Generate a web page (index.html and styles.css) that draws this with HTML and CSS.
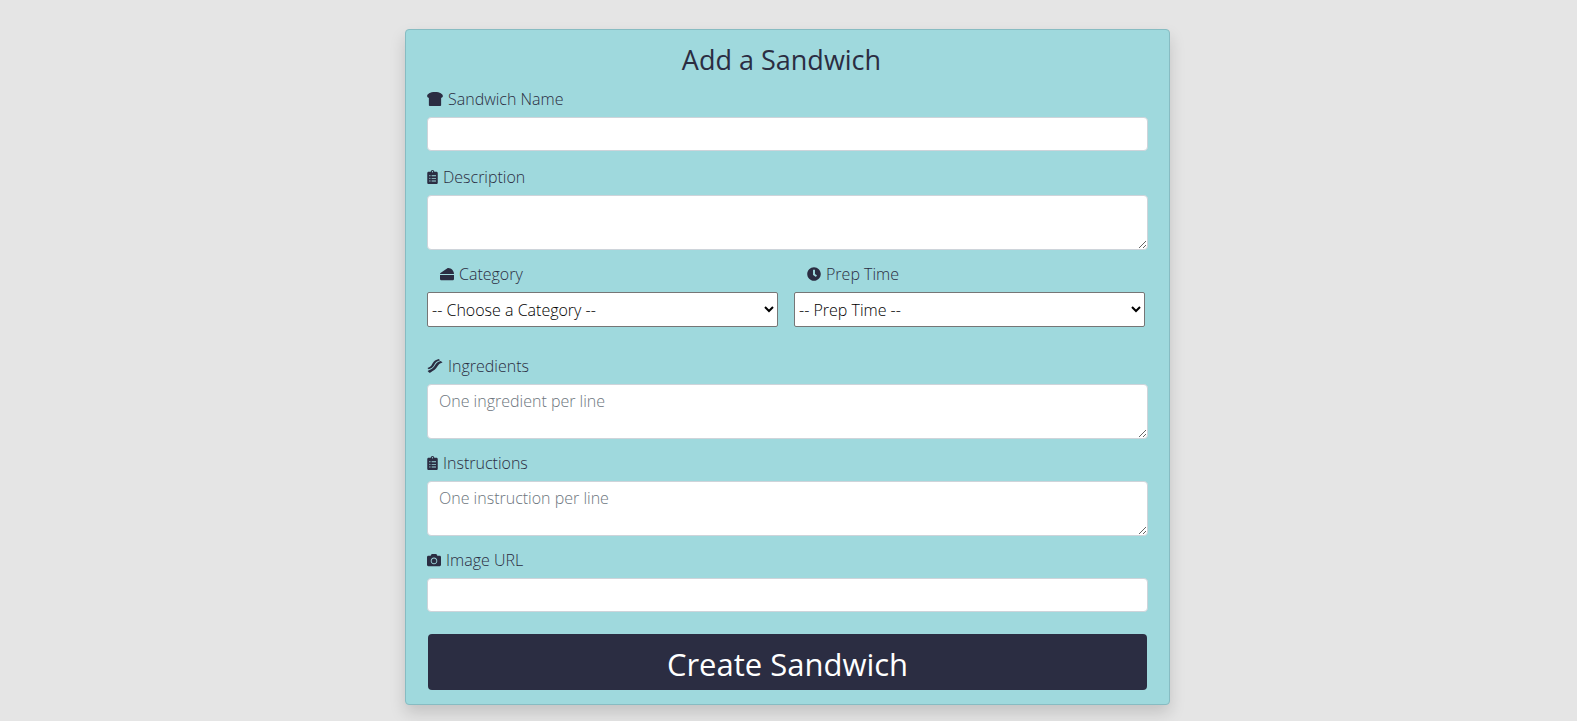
FILE: index.html
```html
<!DOCTYPE html>
<html lang="en">
<head>
<meta charset="utf-8">
<title>Add a Sandwich</title>
<link rel="stylesheet" href="styles.css">
</head>
<body>
<main class="card">
  <h1 class="title">Add a Sandwich</h1>
  <form class="form">
    <div class="field field-name">
      <label class="label" for="name">
        <svg class="icon icon-wide" viewBox="0 0 576 512" aria-hidden="true"><path d="M288 0C108 0 0 80 0 144c0 44 32 64 64 64v272c0 18 14 32 32 32h384c18 0 32-14 32-32V208c32 0 64-20 64-64C576 80 468 0 288 0z"/></svg>
        <span>Sandwich Name</span>
      </label>
      <input class="control" id="name" type="text">
    </div>
    <div class="field">
      <label class="label" for="description">
        <svg class="icon icon-narrow" viewBox="0 0 384 512" aria-hidden="true"><path d="M336 64h-80c0-35.300-28.700-64-64-64s-64 28.700-64 64H48C21.500 64 0 85.500 0 112v352c0 26.500 21.500 48 48 48h288c26.500 0 48-21.500 48-48V112c0-26.500-21.500-48-48-48zM96 424c-13.300 0-24-10.700-24-24s10.700-24 24-24 24 10.700 24 24-10.700 24-24 24zm0-96c-13.300 0-24-10.700-24-24s10.700-24 24-24 24 10.700 24 24-10.700 24-24 24zm0-96c-13.300 0-24-10.700-24-24s10.700-24 24-24 24 10.700 24 24-10.700 24-24 24zm96-192c13.300 0 24 10.700 24 24s-10.700 24-24 24-24-10.700-24-24 10.700-24 24-24zm128 368c0 4.400-3.600 8-8 8H168c-4.400 0-8-3.600-8-8v-16c0-4.400 3.600-8 8-8h144c4.400 0 8 3.600 8 8v16zm0-96c0 4.400-3.600 8-8 8H168c-4.400 0-8-3.600-8-8v-16c0-4.400 3.600-8 8-8h144c4.400 0 8 3.600 8 8v16zm0-96c0 4.400-3.600 8-8 8H168c-4.400 0-8-3.600-8-8v-16c0-4.400 3.600-8 8-8h144c4.400 0 8 3.600 8 8v16z"/></svg>
        <span>Description</span>
      </label>
      <textarea class="control area" id="description"></textarea>
    </div>
    <div class="pair">
      <div class="field">
        <label class="label label-indent" for="category">
          <svg class="icon" viewBox="0 0 512 512" aria-hidden="true"><path d="M0 256c0-22 12-38 30-50L270 46c10-6 22-8 32-7 112 7 210 96 210 217zM0 288h512v160c0 18-14 32-32 32H32c-18 0-32-14-32-32z"/></svg>
          <span>Category</span>
        </label>
        <select class="select" id="category"><option>-- Choose a Category --</option></select>
      </div>
      <div class="field">
        <label class="label label-indent" for="prep">
          <svg class="icon" viewBox="0 0 512 512" aria-hidden="true"><path d="M256 8C119 8 8 119 8 256s111 248 248 248 248-111 248-248S393 8 256 8zm57.100 350.100L224.900 294c-3.100-2.300-4.900-5.900-4.900-9.700V116c0-6.600 5.400-12 12-12h48c6.600 0 12 5.400 12 12v137.700l63.500 46.200c5.400 3.900 6.500 11.400 2.600 16.800l-28.200 38.800c-3.900 5.300-11.400 6.500-16.800 2.600z"/></svg>
          <span>Prep Time</span>
        </label>
        <select class="select" id="prep"><option>-- Prep Time --</option></select>
      </div>
    </div>
    <div class="field">
      <label class="label" for="ingredients">
        <svg class="icon icon-wide" viewBox="0 0 576 512" aria-hidden="true"><path d="M12 326C150 286 151 235 202 155 247 80 319 25 424 2l52 44C325 91 301 148 260 221 216 299 154 350 55 374zM82 399C177 370 234 318 285 238 332 158 367 107 500 70l64 54C451 149 421 200 373 278 318 369 253 420 109 500 96 508 81 508 70 497L17 439z"/></svg>
        <span>Ingredients</span>
      </label>
      <textarea class="control area" id="ingredients" placeholder="One ingredient per line"></textarea>
    </div>
    <div class="field">
      <label class="label" for="instructions">
        <svg class="icon icon-narrow" viewBox="0 0 384 512" aria-hidden="true"><path d="M336 64h-80c0-35.300-28.700-64-64-64s-64 28.700-64 64H48C21.500 64 0 85.500 0 112v352c0 26.500 21.500 48 48 48h288c26.500 0 48-21.500 48-48V112c0-26.500-21.500-48-48-48zM96 424c-13.300 0-24-10.700-24-24s10.700-24 24-24 24 10.700 24 24-10.700 24-24 24zm0-96c-13.300 0-24-10.700-24-24s10.700-24 24-24 24 10.700 24 24-10.700 24-24 24zm0-96c-13.300 0-24-10.700-24-24s10.700-24 24-24 24 10.700 24 24-10.700 24-24 24zm96-192c13.300 0 24 10.700 24 24s-10.700 24-24 24-24-10.700-24-24 10.700-24 24-24zm128 368c0 4.400-3.600 8-8 8H168c-4.400 0-8-3.600-8-8v-16c0-4.400 3.600-8 8-8h144c4.400 0 8 3.600 8 8v16zm0-96c0 4.400-3.600 8-8 8H168c-4.400 0-8-3.600-8-8v-16c0-4.400 3.600-8 8-8h144c4.400 0 8 3.600 8 8v16zm0-96c0 4.400-3.600 8-8 8H168c-4.400 0-8-3.600-8-8v-16c0-4.400 3.600-8 8-8h144c4.400 0 8 3.600 8 8v16z"/></svg>
        <span>Instructions</span>
      </label>
      <textarea class="control area" id="instructions" placeholder="One instruction per line"></textarea>
    </div>
    <div class="field">
      <label class="label" for="image">
        <svg class="icon" viewBox="0 0 512 512" aria-hidden="true"><path d="M512 144v288c0 26.500-21.500 48-48 48H48c-26.500 0-48-21.500-48-48V144c0-26.500 21.500-48 48-48h88l12.300-32.900c7-18.700 24.900-31.100 44.900-31.100h125.500c20 0 37.900 12.400 44.900 31.100L376 96h88c26.500 0 48 21.500 48 48zM376 288c0-66.200-53.800-120-120-120s-120 53.800-120 120 53.800 120 120 120 120-53.800 120-120zm-32 0c0 48.500-39.500 88-88 88s-88-39.500-88-88 39.500-88 88-88 88 39.500 88 88z"/></svg>
        <span>Image URL</span>
      </label>
      <input class="control" id="image" type="text">
    </div>
    <button class="submit" type="submit">Create Sandwich</button>
  </form>
</main>
</body>
</html>
```

FILE: styles.css
```css
* {
  box-sizing: border-box;
}

body {
  margin: 0;
  padding: 29px 2px 16px 0;
  background: #e5e5e5;
  color: #2b2d42;
  font-family: "Open Sans", "Noto Sans", sans-serif;
  font-size: 16px;
  font-weight: 300;
}

.card {
  max-width: 765px;
  margin: 0 auto;
  padding: 12px 21px 14px;
  background: #9fd9dd;
  border: 1px solid #87bcc2;
  border-radius: 4px;
  box-shadow: 0 8px 16px rgba(0, 0, 0, 0.15);
}

.title {
  margin: 0 12px 9px 0;
  font-size: 27px;
  font-weight: 400;
  line-height: 36px;
  text-align: center;
}

.form {
  display: flex;
  flex-direction: column;
  gap: 12px;
}

.field {
  display: flex;
  flex: 1;
  flex-direction: column;
  gap: 6px;
}

.field-name {
  margin-bottom: 2px;
}

.label {
  display: flex;
  align-items: center;
  gap: 5px;
  line-height: 24px;
}

.label-indent {
  padding-left: 13px;
}

.icon {
  width: 14px;
  height: 14px;
  fill: #2b2d42;
}

.icon-wide {
  width: 16px;
}

.icon-narrow {
  width: 11px;
}

.control {
  display: block;
  width: 100%;
  height: 34px;
  padding: 4px 11px;
  background: #fff;
  border: 1px solid #ced4da;
  border-radius: 4px;
  color: #495057;
  font: inherit;
  line-height: 24px;
}

.control::placeholder {
  color: #6c757d;
}

.area {
  height: 55px;
  resize: vertical;
}

.pair {
  display: flex;
  gap: 16px;
  margin: 0 3px 15px 0;
}

.select {
  width: 100%;
  height: 35px;
  padding: 0;
  background: #fff;
  border: 1px solid #767676;
  border-radius: 2px;
  color: #000;
  font: inherit;
}

.submit {
  margin: 10px 1px 0;
  padding: 10px 8px 6px;
  background: #2b2d42;
  border: 0;
  border-radius: 4px;
  color: #fff;
  font: inherit;
  font-size: 31px;
  font-weight: 400;
  line-height: 40px;
}
```
